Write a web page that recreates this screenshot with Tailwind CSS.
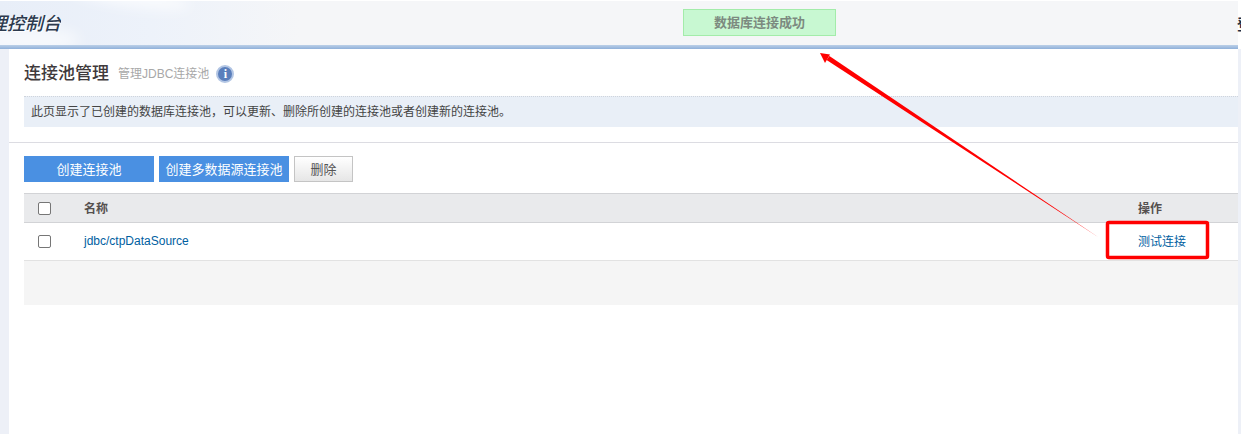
<!DOCTYPE html>
<html lang="zh-CN">
<head>
<meta charset="utf-8">
<script src="https://cdn.jsdelivr.net/npm/@tailwindcss/browser@4"></script>
</head>
<body class="bg-white">
<div class="relative w-[1241px] h-[434px] overflow-hidden flex flex-col bg-white font-['Liberation_Sans','Noto_Sans_CJK_SC',sans-serif]">
  <header class="relative h-[45px] w-[1238px] shrink-0 overflow-hidden bg-[#f5f6f8] border-t border-white flex items-start">
    <div class="absolute left-0 top-0 w-[300px] h-[45px] bg-gradient-to-r from-[#e8eef8] via-[#edf2fa] to-transparent"></div>
    <div class="absolute left-[70px] top-[-14px] w-[120px] h-[20px] rounded-[50%] bg-white/60 rotate-[8deg] blur-[6px]"></div>
    <div class="absolute left-[-30px] top-[26px] w-[110px] h-[26px] rounded-[50%] bg-white/60 blur-[7px]"></div>
    <span class="relative w-[61px] h-[44px] overflow-hidden shrink-0 flex justify-end items-start pt-[10px] text-[18px] leading-[26px] italic font-medium text-[#2c3a4e] whitespace-nowrap [text-shadow:1px_1px_1px_#ffffff]">理控制台</span>
    <div class="absolute left-[683px] top-[8px] w-[153px] h-[27px] border border-[#a3ecaa] bg-[#c8f8d2] flex items-center justify-center text-[13px] font-bold text-[#7c8a80]">数据库连接成功</div>
  </header>
  <span class="absolute left-[1237px] top-[16px] text-[15px] leading-[18px] font-bold text-[#1e2c40]">登</span>
  <div class="h-[4px] w-[1238px] shrink-0 bg-gradient-to-b from-[#bcd0e8] to-[#8fb0da]"></div>
  <div class="flex-1 flex min-h-0">
    <aside class="w-[9px] shrink-0 bg-[#edf0f7]"></aside>
    <main class="flex-1 min-w-0 flex flex-col">
      <div class="pl-[15px]">
        <div class="h-[47px] flex items-center pt-[2px] gap-[10px]">
          <h1 class="w-[84px] whitespace-nowrap text-[17px] leading-[22px] font-medium text-[#3f3a3c]">连接池管理</h1>
          <span class="text-[12px] text-[#a8a8a8]">管理JDBC连接池</span>
          <span class="-ml-[3px] w-[18px] h-[18px] rounded-full bg-[#5b7fbc] border-2 border-[#b3c6e4] flex items-center justify-center text-white text-[12px] font-bold font-['Liberation_Serif',serif]">i</span>
        </div>
        <div class="h-[31px] border-t border-dotted border-[#cfd4dc] bg-[#e9eff7] flex items-center pl-[7px] text-[12px] text-[#444]">此页显示了已创建的数据库连接池，可以更新、删除所创建的连接池或者创建新的连接池。</div>
      </div>
      <div class="mt-[15px] h-px bg-[#dcdce2]"></div>
      <div class="pl-[15px]">
        <div class="mt-[13px] flex gap-[5px] h-[26px]">
          <button class="w-[130px] pt-[2px] bg-[#4a90e2] text-white text-[13px]">创建连接池</button>
          <button class="w-[130px] pt-[2px] bg-[#4a90e2] text-white text-[13px] whitespace-nowrap">创建多数据源连接池</button>
          <button class="w-[59px] pt-[2px] border border-[#c4c4c4] bg-gradient-to-b from-white to-[#e6e6e6] text-[#555] text-[13px]">删除</button>
        </div>
        <div class="mt-[11px] h-[30px] border-y border-[#d2d3d6] bg-[#e9eaec] flex items-center text-[12px] font-bold text-[#55504f]">
          <div class="w-[60px] pl-[14px] flex"><span class="w-[13px] h-[13px] border border-[#767676] rounded-[2px] bg-white"></span></div>
          <div class="flex-1 pt-[2px]">名称</div>
          <div class="w-[100px] pt-[2px]">操作</div>
        </div>
        <div class="h-[38px] border-b border-[#e2e2e2] flex items-center text-[12px] text-[#00609f]">
          <div class="w-[60px] pl-[14px] flex"><span class="w-[13px] h-[13px] border border-[#767676] rounded-[2px] bg-white"></span></div>
          <div class="flex-1 -mt-[2px]">jdbc/ctpDataSource</div>
          <div class="w-[100px]">测试连接</div>
        </div>
        <div class="h-[44px] bg-[#f5f5f5]"></div>
      </div>
    </main>
    <aside class="w-[3px] shrink-0 bg-[#edf0f7]"></aside>
  </div>
  <svg class="absolute left-0 top-0 pointer-events-none" width="1241" height="434" viewBox="0 0 1241 434" fill="none">
    <polygon points="1098,237 826.6,60.1 829.4,55.9" fill="#ff0000"></polygon>
    <polygon points="820,53 830,54.5 825,63" fill="#ff0000"></polygon>
    <rect x="1107.5" y="222.5" width="100" height="35" rx="1.5" stroke="#ff0000" stroke-width="3.5"></rect>
  </svg>
</div>
</body>
</html>
